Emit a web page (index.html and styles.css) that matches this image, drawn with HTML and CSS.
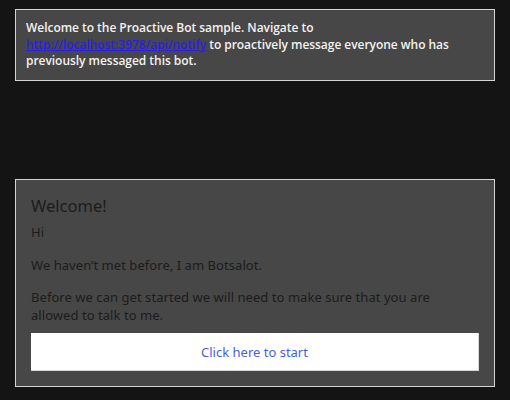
FILE: index.html
```html
<!DOCTYPE html>
<html>
<head>
<meta charset="utf-8">
<link rel="stylesheet" href="styles.css">
</head>
<body>
<div class="notice">
  Welcome to the Proactive Bot sample. Navigate to <a href="#" class="link">http://localhost:3978/api/notify</a> to proactively message everyone who has previously messaged this bot.
</div>
<div class="card">
  <div class="title">Welcome!</div>
  <p class="text first">Hi</p>
  <p class="text">We haven’t met before, I am Botsalot.</p>
  <p class="text">Before we can get started we will need to make sure that you are allowed to talk to me.</p>
  <div class="button">Click here to start</div>
</div>
</body>
</html>
```

FILE: styles.css
```css
html, body {
  margin: 0;
  background: #141414;
}
body {
  padding: 9px 15px;
  font-family: "Noto Sans", "Open Sans", sans-serif;
  font-size: 13px;
}
.notice {
  border: 1px solid #d4d4d4;
  background: #474747;
  color: #f2f2f2;
  font-family: "Open Sans", "Noto Sans", sans-serif;
  font-size: 12px;
  font-weight: 600;
  letter-spacing: -0.04px;
  line-height: 16.67px;
  padding: 10px 10px;
}
.link {
  color: #2a1ee6;
  text-decoration: underline;
}
.card {
  margin-top: 98px;
  border: 1px solid #d4d4d4;
  background: #474747;
  color: #1c1c1c;
  padding: 15px 15px 15px 15px;
}
.title {
  font-size: 16.5px;
  line-height: 22px;
}
.text {
  margin: 15px 0 0 0;
  line-height: 17.5px;
  letter-spacing: 0.05px;
}
.text.first {
  margin-top: 7px;
}
.button {
  margin-top: 9px;
  height: 38px;
  box-sizing: border-box;
  background: #ffffff;
  border-right: 1px solid #d8d8d8;
  border-bottom: 1px solid #d8d8d8;
  color: #4a60da;
  display: flex;
  align-items: center;
  justify-content: center;
}
```
